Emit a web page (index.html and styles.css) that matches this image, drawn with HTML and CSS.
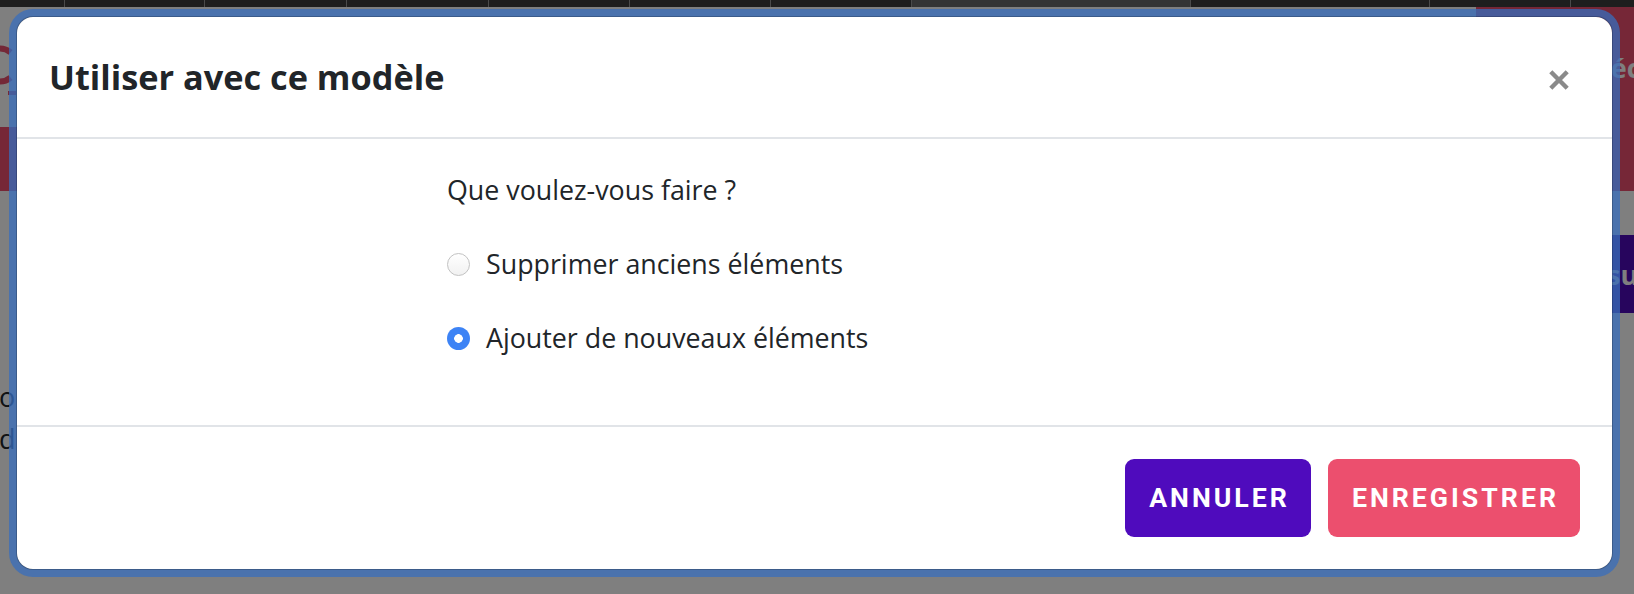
FILE: index.html
```html
<!DOCTYPE html>
<html lang="fr">
<head>
<meta charset="utf-8">
<title>Utiliser avec ce modèle</title>
<link rel="stylesheet" href="styles.css">
</head>
<body>
<div class="topbar">
  <span class="tab"></span><span class="tab"></span><span class="tab"></span><span class="tab"></span><span class="tab"></span><span class="tab"></span><span class="tab"></span><span class="tab tab-active"></span><span class="tab"></span><span class="tab"></span><span class="tab"></span>
</div>
<div class="app">
  <header class="nav">
    <svg class="logo" width="46" height="62" viewBox="0 0 46 62" aria-hidden="true">
      <path d="M40.6 15.4 A16.5 16.5 0 1 0 40.6 40.6" fill="none" stroke="#e9506f" stroke-width="6"/>
      <rect x="38" y="54" width="8" height="4" fill="#e9506f"/>
    </svg>
    <div class="nav-action">Séc</div>
  </header>
  <div class="band"></div>
  <main class="content">
    <div class="page-text">
      <p class="page-line">ou</p>
      <p class="page-line">di</p>
    </div>
    <div class="page-btn">su</div>
  </main>
  <div class="backdrop"></div>
  <div class="modal" role="dialog" aria-labelledby="modal-title">
    <div class="modal-header">
      <h4 class="modal-title" id="modal-title">Utiliser avec ce modèle</h4>
      <button class="close" type="button" aria-label="Fermer">
        <svg width="20" height="20" viewBox="0 0 20 20" aria-hidden="true">
          <path d="M1.8 1.8 L18.2 18.2 M18.2 1.8 L1.8 18.2" stroke="#8a8a8a" stroke-width="4.4" fill="none"/>
        </svg>
      </button>
    </div>
    <div class="modal-body">
      <div class="choices">
        <p class="question">Que voulez-vous faire&nbsp;?</p>
        <label class="option"><input class="radio" type="radio" name="mode"><span>Supprimer anciens éléments</span></label>
        <label class="option"><input class="radio" type="radio" name="mode" checked><span>Ajouter de nouveaux éléments</span></label>
      </div>
    </div>
    <div class="modal-footer">
      <button class="btn btn-cancel" type="button">ANNULER</button>
      <button class="btn btn-save" type="button">ENREGISTRER</button>
    </div>
  </div>
</div>
</body>
</html>
```
FILE: styles.css
```css
* { box-sizing: border-box; }
html, body { margin: 0; padding: 0; }
body {
  width: 1634px;
  height: 594px;
  overflow: hidden;
  font-family: "Open Sans", "Noto Sans", sans-serif;
  color: #212529;
  background: #808080;
}
.topbar {
  height: 7px;
  display: grid;
  grid-template-columns: 65px 140px 142px 142px 141px 141px 141px 279px 239px 141px 1fr;
  background: #1e1e1e;
}
.tab { border-right: 1px solid #4a4a4a; }
.tab:last-child { border-right: none; }
.tab-active { background: #343434; }

.app {
  position: relative;
  height: 587px;
  overflow: hidden;
  background: #ffffff;
}
.nav {
  height: 120px;
  display: flex;
  justify-content: space-between;
  align-items: stretch;
}
.logo { margin: 30px 0 0 -30px; }
.nav-action {
  width: 158px;
  background: #ec4f6e;
  color: #ffffff;
  font-weight: 700;
  font-size: 27px;
  padding-left: 120px;
  display: flex;
  align-items: center;
  white-space: nowrap;
  overflow: hidden;
}
.band { height: 64px; background: #ec4f6e; }
.content {
  display: flex;
  justify-content: space-between;
  align-items: flex-start;
}
.page-text { margin: 185px 0 0 -1px; }
.page-line {
  margin: 0;
  font-size: 27px;
  line-height: 42px;
  color: #212529;
}
.page-btn {
  margin-top: 44px;
  width: 43px;
  height: 78px;
  background: #4e0abb;
  color: #ffffff;
  font-weight: 700;
  font-size: 27px;
  padding-left: 16px;
  display: flex;
  align-items: center;
  white-space: nowrap;
  overflow: hidden;
}
.backdrop {
  position: absolute;
  inset: 0;
  background: rgba(0, 0, 0, 0.5);
}
.modal {
  position: absolute;
  left: 16px;
  top: 9px;
  width: 1597px;
  height: 554px;
  background: #ffffff;
  background-clip: padding-box;
  border: 1px solid rgba(0, 0, 0, 0.2);
  border-radius: 17px;
  box-shadow: 0 0 0 7px rgba(56, 109, 188, 0.75);
  display: flex;
  flex-direction: column;
}
.modal-header {
  height: 122px;
  padding: 0 43px 0 32px;
  border-bottom: 2px solid #e1e4e8;
  display: flex;
  align-items: center;
  justify-content: space-between;
}
.modal-title {
  margin: 0;
  font-size: 34.3px;
  font-weight: 700;
  line-height: 42px;
  color: #212529;
}
.close {
  margin-top: 5px;
  padding: 0;
  border: none;
  background: none;
  width: 20px;
  height: 20px;
  display: flex;
}
.modal-body {
  padding: 31px 0 67px 430px;
  border-bottom: 2px solid #e1e4e8;
}
.choices {
  display: flex;
  flex-direction: column;
  gap: 34px;
}
.question, .option {
  margin: 0;
  font-size: 26.8px;
  line-height: 40px;
  height: 40px;
}
.option {
  display: flex;
  align-items: center;
  gap: 16px;
}
.radio {
  appearance: none;
  -webkit-appearance: none;
  margin: 0;
  width: 23px;
  height: 23px;
  border-radius: 50%;
  border: 1px solid #c2c2c2;
  background: linear-gradient(#ffffff, #f1f1f1);
  flex: none;
}
.radio:checked {
  border: none;
  background: radial-gradient(circle, #ffffff 0 4px, #3d83f5 4.6px);
}
.modal-footer {
  flex: 1;
  padding: 32px;
  display: flex;
  justify-content: flex-end;
  align-items: center;
  gap: 17px;
}
.btn {
  height: 78px;
  padding: 0 21px 0 24px;
  border: none;
  border-radius: 9px;
  color: #ffffff;
  font-family: Roboto, "Open Sans", sans-serif;
  font-weight: 700;
  font-size: 26.7px;
  letter-spacing: 3px;
}
.btn-cancel { background: #4f0bbd; }
.btn-save { background: #ec4f6e; }
```
